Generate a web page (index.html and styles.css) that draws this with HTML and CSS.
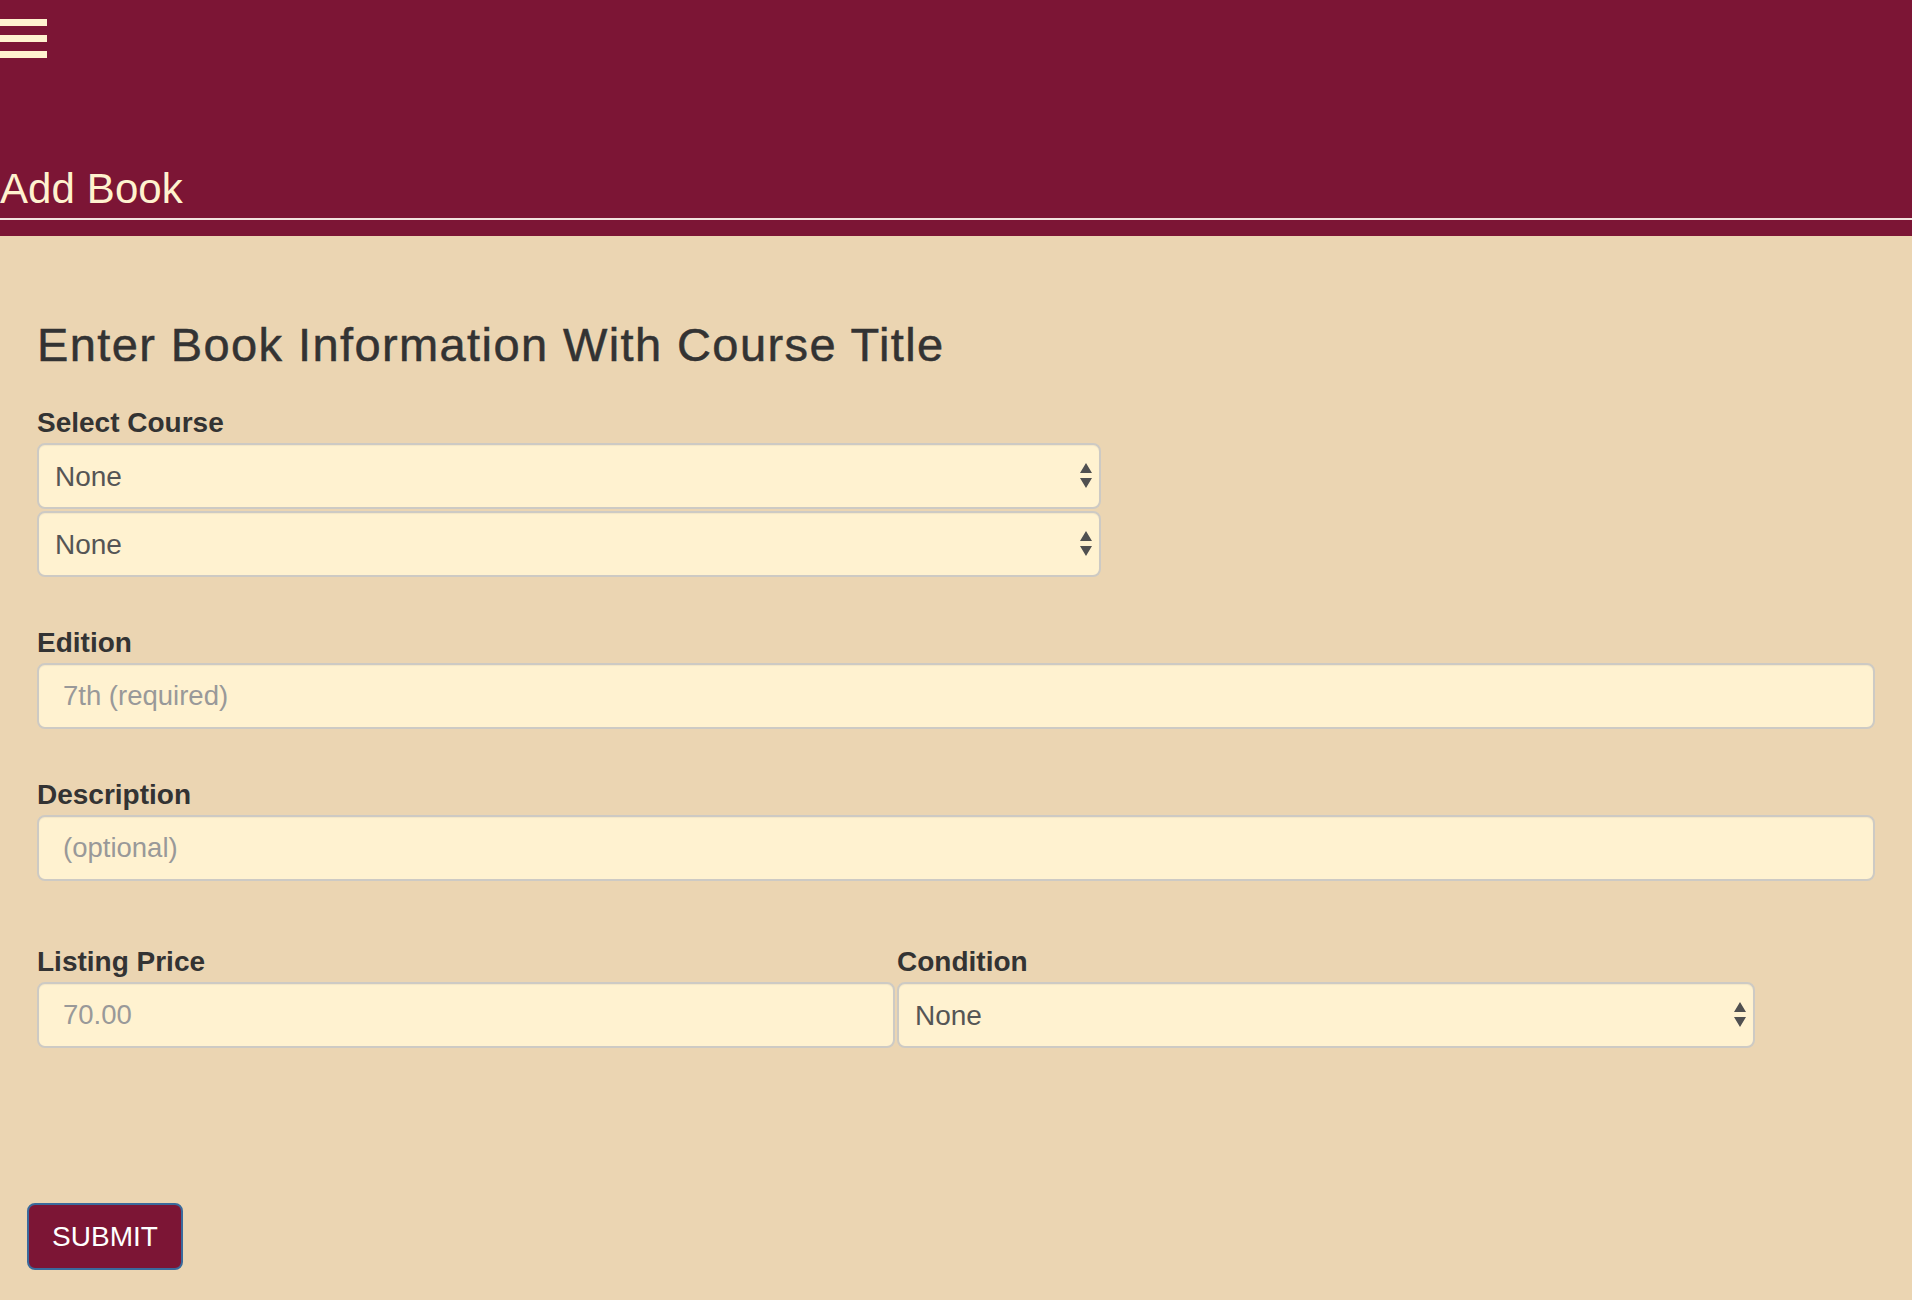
FILE: index.html
```html
<!DOCTYPE html>
<html lang="en">
<head>
<meta charset="utf-8">
<title>Add Book</title>
<link rel="stylesheet" href="styles.css">
</head>
<body>
<header class="topbar">
  <div class="menu-icon"><span></span><span></span><span></span></div>
  <h1 class="page-title">Add Book</h1>
  <div class="rule"></div>
</header>
<main class="content">
  <h2 class="form-heading">Enter Book Information With Course Title</h2>
  <form class="book-form">
    <div class="group">
      <label class="field-label">Select Course</label>
      <div class="select-wrap narrow">
        <select class="field select"><option>None</option></select>
        <svg class="arrows" width="12" height="25" viewBox="0 0 12 25"><path d="M6 0 L12 10 L0 10 Z M0 15 L12 15 L6 25 Z" fill="#505050"/></svg>
      </div>
      <div class="select-wrap narrow second">
        <select class="field select"><option>None</option></select>
        <svg class="arrows" width="12" height="25" viewBox="0 0 12 25"><path d="M6 0 L12 10 L0 10 Z M0 15 L12 15 L6 25 Z" fill="#505050"/></svg>
      </div>
    </div>
    <div class="group gap-a">
      <label class="field-label">Edition</label>
      <input class="field input" type="text" placeholder="7th (required)">
    </div>
    <div class="group gap-a">
      <label class="field-label">Description</label>
      <input class="field input" type="text" placeholder="(optional)">
    </div>
    <div class="row gap-b">
      <div class="col">
        <label class="field-label">Listing Price</label>
        <input class="field input" type="text" placeholder="70.00">
      </div>
      <div class="col">
        <label class="field-label">Condition</label>
        <div class="select-wrap">
          <select class="field select"><option>None</option></select>
          <svg class="arrows" width="12" height="25" viewBox="0 0 12 25"><path d="M6 0 L12 10 L0 10 Z M0 15 L12 15 L6 25 Z" fill="#505050"/></svg>
        </div>
      </div>
    </div>
    <button class="submit" type="button">SUBMIT</button>
  </form>
</main>
</body>
</html>
```
FILE: styles.css
```css
* { box-sizing: border-box; }
html, body { margin: 0; padding: 0; }
body {
  background: #ebd5b2;
  font-family: "Liberation Sans", Arial, sans-serif;
  color: #333;
  min-height: 1300px;
}
.topbar {
  background: #7c1535;
  height: 236px;
  padding-top: 19px;
}
.menu-icon {
  width: 47px;
  display: flex;
  flex-direction: column;
  gap: 9px;
}
.menu-icon span {
  display: block;
  height: 7px;
  background: #fff2cf;
}
.page-title {
  margin: 107px 0 0 0;
  font-size: 42px;
  line-height: 48px;
  font-weight: normal;
  color: #fff2cf;
  letter-spacing: 0.1px;
}
.rule {
  margin-top: 5px;
  height: 2px;
  background: #f3e3df;
}
.content {
  padding: 82px 37px 0 37px;
}
.form-heading {
  margin: 0;
  font-size: 47px;
  line-height: 54px;
  font-weight: normal;
  color: #333;
  letter-spacing: 1.4px;
  -webkit-text-stroke: 0.5px #333;
}
.book-form { margin-top: 36px; }
.field-label {
  display: block;
  font-size: 28px;
  line-height: 30px;
  font-weight: bold;
  color: #333;
  margin-bottom: 5px;
}
.group.gap-a { margin-top: 51px; }
.row.gap-b { margin-top: 66px; }
.row {
  display: flex;
  gap: 2px;
}
.col { width: 858px; }
.field {
  display: block;
  width: 100%;
  height: 66px;
  border: 2px solid #cdcac4;
  border-radius: 8px;
  background: #fff2d0;
  font-family: "Liberation Sans", Arial, sans-serif;
  font-size: 28px;
  color: #555;
  box-shadow: inset 0 1px 1px rgba(0,0,0,0.05);
  outline: none;
}
.input { padding: 0 24px; font-size: 27.5px; }
.input::placeholder { color: #999; }
.select {
  -webkit-appearance: none;
  appearance: none;
  padding: 0 40px 0 16px;
}
.select-wrap { position: relative; }
.select-wrap.narrow { width: 1064px; }
.select-wrap.second { margin-top: 2px; }
.arrows {
  position: absolute;
  right: 9px;
  top: 20px;
  pointer-events: none;
}
.submit {
  margin: 155px 0 0 -10px;
  display: block;
  width: 156px;
  height: 67px;
  background: #7c1535;
  border: 2px solid #3a6a9c;
  border-radius: 8px;
  color: #fff;
  font-family: "Liberation Sans", Arial, sans-serif;
  font-size: 28px;
  padding: 0;
}
```
